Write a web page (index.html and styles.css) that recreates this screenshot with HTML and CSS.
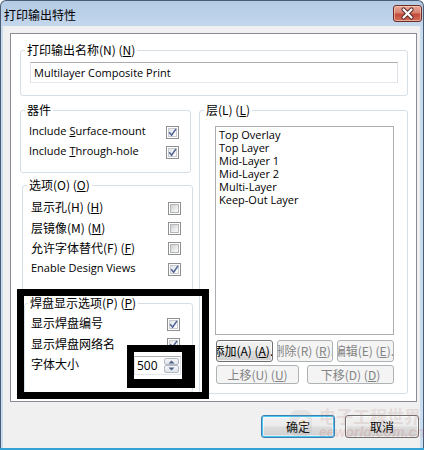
FILE: index.html
```html
<!DOCTYPE html>
<html lang="zh-CN">
<head>
<meta charset="utf-8">
<title>打印输出特性</title>
<link rel="stylesheet" href="styles.css">
</head>
<body>
<div class="win">
  <div class="titlebar">
    <span class="title">打印输出特性</span>
    <span class="close"><svg viewBox="0 0 29 17" width="29" height="17"><path d="M10.5 4.5 L18.5 12.5 M18.5 4.5 L10.5 12.5" stroke="#5a2a25" stroke-width="4.2" stroke-linecap="round"/><path d="M10.5 4.5 L18.5 12.5 M18.5 4.5 L10.5 12.5" stroke="#fff" stroke-width="2.2" stroke-linecap="round"/></svg></span>
  </div>
  <div class="body">
    <div class="panel">
      <fieldset class="grp g-name">
        <legend>打印输出名称(N) (<u>N</u>)</legend>
        <div class="textbox en">Multilayer Composite Print</div>
      </fieldset>
      <div class="cols">
        <div class="leftcol">
          <fieldset class="grp g-comp">
            <legend>器件</legend>
            <div class="row"><span class="lbl en">Include <u>S</u>urface-mount</span><span class="cb on"><i><svg viewBox="0 0 9 9"><path d="M1.2 4.3 L3.6 7.2 L8 0.8"/></svg></i></span></div>
            <div class="row"><span class="lbl en">Include <u>T</u>hrough-hole</span><span class="cb on"><i><svg viewBox="0 0 9 9"><path d="M1.2 4.3 L3.6 7.2 L8 0.8"/></svg></i></span></div>
          </fieldset>
          <fieldset class="grp g-opt">
            <legend>选项(O) (<u>O</u>)</legend>
            <div class="row"><span class="lbl">显示孔(H) (<u>H</u>)</span><span class="cb"><i></i></span></div>
            <div class="row"><span class="lbl">层镜像(M) (<u>M</u>)</span><span class="cb"><i></i></span></div>
            <div class="row"><span class="lbl">允许字体替代(F) (<u>F</u>)</span><span class="cb"><i></i></span></div>
            <div class="row"><span class="lbl en">Enable Design Views</span><span class="cb on"><i><svg viewBox="0 0 9 9"><path d="M1.2 4.3 L3.6 7.2 L8 0.8"/></svg></i></span></div>
          </fieldset>
          <fieldset class="grp g-pad">
            <legend>焊盘显示选项(P) (<u>P</u>)</legend>
            <div class="row"><span class="lbl">显示焊盘编号</span><span class="cb on"><i><svg viewBox="0 0 9 9"><path d="M1.2 4.3 L3.6 7.2 L8 0.8"/></svg></i></span></div>
            <div class="row"><span class="lbl">显示焊盘网络名</span><span class="cb on"><i><svg viewBox="0 0 9 9"><path d="M1.2 4.3 L3.6 7.2 L8 0.8"/></svg></i></span></div>
            <div class="row"><span class="lbl">字体大小</span>
              <span class="spin"><span class="val en">500</span><span class="arrows"><b class="ab"><svg viewBox="0 0 7 4" width="7" height="4"><path d="M0.5 3.5 L3.5 0.5 L6.5 3.5Z" fill="#4d6185"/></svg></b><b class="ab"><svg viewBox="0 0 7 4" width="7" height="4"><path d="M0.5 0.5 L3.5 3.5 L6.5 0.5Z" fill="#4d6185"/></svg></b></span></span>
            </div>
          </fieldset>
        </div>
        <fieldset class="grp g-layer">
          <legend>层(L) (<u>L</u>)</legend>
          <div class="listbox en">
            <div>Top Overlay</div>
            <div>Top Layer</div>
            <div>Mid-Layer 1</div>
            <div>Mid-Layer 2</div>
            <div>Multi-Layer</div>
            <div>Keep-Out Layer</div>
          </div>
          <div class="btnrow3">
            <span class="btn"><span>添加(A) (<u>A</u>)..</span></span>
            <span class="btn dis"><span>删除(R) (<u>R</u>)..</span></span>
            <span class="btn dis"><span>编辑(E) (<u>E</u>)..</span></span>
          </div>
          <div class="btnrow2">
            <span class="btn dis"><span>上移(U) (<u>U</u>)</span></span>
            <span class="btn dis"><span>下移(D) (<u>D</u>)</span></span>
          </div>
        </fieldset>
      </div>
    </div>
    <div class="footer">
      <span class="btn big def"><span>确定</span></span>
      <span class="btn big"><span>取消</span></span>
    </div>
  </div>
  <div class="mark outer"></div>
  <div class="mark inner"></div>
  <div class="wm">
    <svg class="wm-logo" viewBox="0 0 24 30" width="24" height="30"><rect x="1" y="2" width="22" height="26" rx="7" fill="#9a9a9a"/><circle cx="14" cy="15" r="6" fill="#fff"/><circle cx="14" cy="15" r="3.5" fill="#e8a040"/></svg>
    <div class="wm-text">
      <div class="wm-cn">电子工程世界</div>
      <div class="wm-en">eeworld.com.cn</div>
    </div>
  </div>
</div>
</body>
</html>
```
FILE: styles.css
```css
html, body { margin: 0; padding: 0; }
body {
  width: 429px; height: 450px; overflow: hidden; background: #fff;
  font-family: "Noto Sans CJK SC", sans-serif;
  font-size: 12px; color: #000;
}
.en { font-family: "Open Sans", "Noto Sans CJK SC", sans-serif; font-size: 11px; }
u { text-decoration: underline; text-underline-offset: 1px; }

.win {
  position: relative;
  box-sizing: border-box;
  width: 424px; height: 450px;
  border: 1px solid #4a5d74; border-bottom: 0;
  border-radius: 6px 6px 0 0;
  background: linear-gradient(#b4cbe5 0, #c3d6ec 25px, #c9dbee 26px, #c9dbee);
  padding: 0 3px 0 2px;
  display: flex; flex-direction: column;
}
.win::after {
  content: ""; display: block; height: 2px; margin: 0 -4px 0 -3px; background: #35a2d6;
}

.titlebar {
  height: 25px; flex: none;
  display: flex; justify-content: space-between; align-items: flex-start;
  padding-left: 1px;
}
.title { font-size: 12px; line-height: 16px; margin-top: 6px; color: #000; }
.close {
  width: 29px; height: 17px; margin-top: 4px; margin-right: -2px;
  box-sizing: border-box; border: 1px solid #6f2e25; border-radius: 3px;
  background: linear-gradient(#e8a898 0%, #d88270 45%, #c4493a 55%, #d0705a 100%);
  box-shadow: inset 0 0 0 1px rgba(255,220,210,.55);
  display: flex; align-items: center; justify-content: center; overflow: hidden;
}
.close svg { display: block; margin: -1px; }

.body {
  flex: 1; background: #f0f0f0;
  padding: 7px 0 0 7px;
  display: flex; flex-direction: column;
}
.panel {
  box-sizing: border-box; width: 407px; height: 369px;
  border: 1px solid #898c95; background: #fff;
  padding: 8px 8px 0 9px;
}

fieldset.grp {
  margin: 0; padding: 0; min-width: 0;
  border: 1px solid #d5dfe5; border-radius: 3px;
  box-sizing: border-box;
}
legend { padding: 0 2px; font-size: 12px; line-height: 16px; }
.g-name { height: 54px; padding: 4px 9px 0 9px !important; }
.g-name legend { margin-left: -5px; }
.textbox {
  box-sizing: border-box; height: 21px; width: 368px;
  border: 1px solid; border-color: #abadb3 #dbdfe6 #e3e9ef #e2e3ea;
  padding-left: 3px; line-height: 19px; white-space: nowrap;
}

.cols { display: flex; gap: 6px; margin-top: 6px; }
.leftcol { width: 173px; display: flex; flex-direction: column; }

.row { height: 20px; display: flex; align-items: center; justify-content: space-between; }
.lbl { line-height: 16px; white-space: nowrap; margin-top: -2px; }
.cb {
  flex: none; width: 13px; height: 13px; box-sizing: border-box;
  border: 1px solid #8e8f8f; background: #fff; padding: 1px;
}
.cb i {
  display: block; width: 9px; height: 9px; box-sizing: border-box;
  border: 1px solid #b4b7bb;
  background: linear-gradient(135deg, #cfcfcf, #f4f4f4 80%);
}
.cb.on i { background: linear-gradient(135deg, #e2e4e8, #fafafa 80%); border-color: #c8cbd0; }
.cb svg { display: block; width: 9px; height: 9px; margin: -1px; overflow: visible; }
.cb svg path { fill: none; stroke: #4e6294; stroke-width: 1.5; }

.g-comp { width: 171px; height: 71px; padding: 4px 11px 0 8px !important; }
.g-comp legend { margin-left: -4px; }
.g-opt { width: 171px; height: 114px; margin: 4px 0 0 2px !important; padding: 5px 11px 0 8px !important; }
.g-opt legend { margin-left: -4px; }
.g-opt .row { height: 20.4px; }
.g-pad { width: 169px; height: 98px; margin: 4px 0 0 4px !important; padding: 3px 12px 0 6px !important; }
.g-pad legend { margin-left: -3px; }
.g-pad .row { height: 20.5px; }

.spin {
  box-sizing: border-box; width: 47px; height: 19px; margin-right: -1px;
  border: 1px solid #abadb3; border-color: #abadb3 #dbdfe6 #e3e9ef #e2e3ea;
  background: #fff; display: flex; align-items: stretch;
}
.val { padding-left: 2px; line-height: 17px; font-size: 12px; }
.arrows { margin-left: auto; width: 16px; display: flex; flex-direction: column; padding: 1px 1px 1px 0; box-sizing: border-box; }
.ab {
  flex: 1; display: flex; align-items: center; justify-content: center;
  border: 1px solid #b3bac5; border-radius: 2px;
  background: linear-gradient(#f6f7f9, #dfe3e9);
}
.ab svg { display: block; }

.g-layer { width: 209px; height: 292px; padding: 8px 0 0 15px !important; }
.g-layer legend { margin-left: -11px; }
.listbox {
  box-sizing: border-box; width: 179px; height: 209px;
  border: 1px solid #abadb3; padding: 1px 0 0 3px;
  line-height: 13px;
}
.btnrow3 {
  display: grid; grid-template-columns: 57px 56px 57px; column-gap: 4px;
  margin: 5px 0 0 1px; height: 22px;
}
.btnrow2 {
  display: grid; grid-template-columns: 83px 87px; column-gap: 8px;
  margin: 3px 0 0 1px; height: 19px;
}
.btn {
  box-sizing: border-box; border: 1px solid #707070; border-radius: 3px;
  background: linear-gradient(#f2f2f2 0%, #ebebeb 48%, #dddddd 52%, #cfcfcf 100%);
  box-shadow: inset 0 0 0 1px rgba(255,255,255,.75);
  display: flex; align-items: center; justify-content: center;
  overflow: hidden; white-space: nowrap;
  font-size: 12px; line-height: 16px;
}
.btn > span { flex: none; }
.btn.dis { border-color: #adb2b5; background: #f4f4f4; color: #838383; box-shadow: none; }
.footer { display: flex; justify-content: flex-end; gap: 10px; margin: 13px 1px 0 0; }
.btn.big { width: 74px; height: 23px; }
.btn.def {
  border-color: #3c7fb1;
  box-shadow: inset 0 0 0 1px #48c6f4, inset 0 0 0 2px rgba(255,255,255,.5);
}

.mark { position: absolute; box-sizing: border-box; border: 7px solid #000; pointer-events: none; }
.mark.outer { left: 16px; top: 288px; width: 192px; height: 110px; }
.mark.inner { left: 126px; top: 344px; width: 68px; height: 43px; border-width: 7px 13px 9px 7px; }

.wm {
  position: absolute; left: 288px; top: 405px; display: flex; align-items: center; gap: 6px;
  opacity: .14; pointer-events: none;
}
.wm-cn { font-weight: 700; font-size: 17px; line-height: 19px; color: #a06060; }
.wm-en { font-family: "Liberation Sans", sans-serif; font-style: italic; font-weight: 700; font-size: 14px; line-height: 14px; color: #c04040; }
```
